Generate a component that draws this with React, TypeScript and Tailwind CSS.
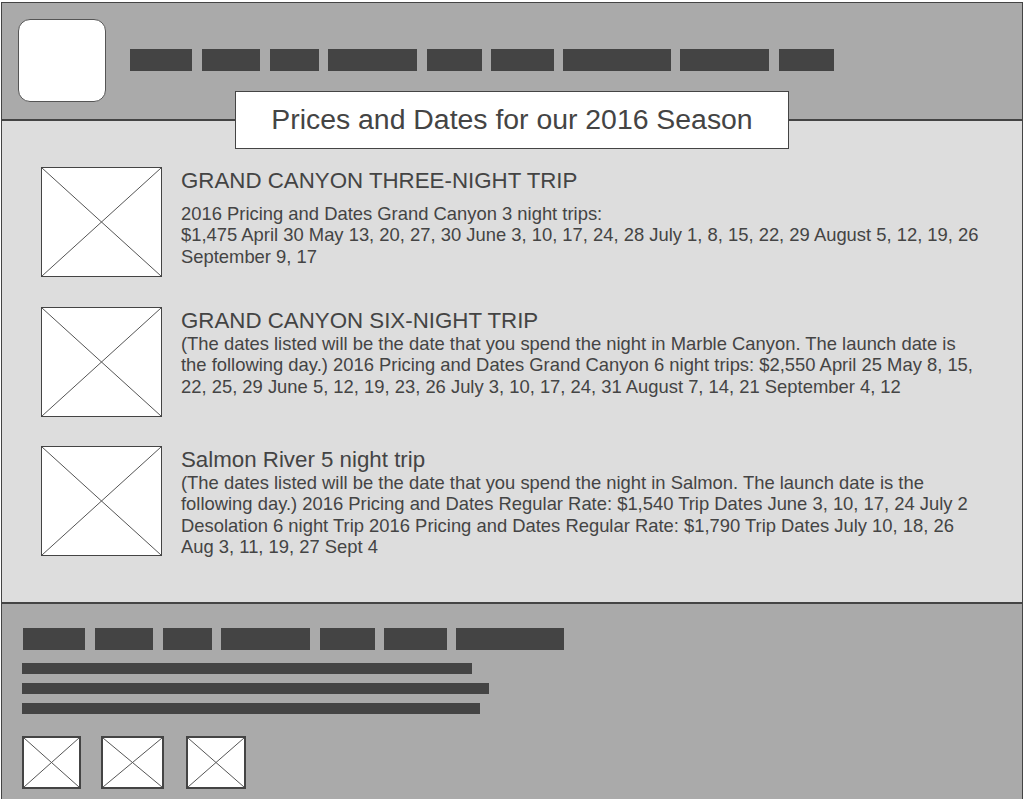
import React from "react";

const headerBars = [
  "w-[62px]",
  "ml-[10px] w-[58px]",
  "ml-[10px] w-[49px]",
  "ml-[9px] w-[89px]",
  "ml-[10px] w-[55px]",
  "ml-[9px] w-[63px]",
  "ml-[9px] w-[108px]",
  "ml-[9px] w-[89px]",
  "ml-[10px] w-[55px]",
];

const footerBars = [
  "ml-px w-[62px]",
  "ml-[10px] w-[58px]",
  "ml-[10px] w-[49px]",
  "ml-[9px] w-[89px]",
  "ml-[10px] w-[55px]",
  "ml-[9px] w-[63px]",
  "ml-[9px] w-[108px]",
];

const trips = [
  {
    title: "GRAND CANYON THREE-NIGHT TRIP",
    spaced: true,
    body: (
      <>
        2016 Pricing and Dates Grand Canyon 3 night trips:
        <br />
        $1,475 April 30 May 13, 20, 27, 30 June 3, 10, 17, 24, 28 July 1, 8, 15, 22, 29 August 5, 12, 19, 26 September 9, 17
      </>
    ),
  },
  {
    title: "GRAND CANYON SIX-NIGHT TRIP",
    spaced: false,
    body: "(The dates listed will be the date that you spend the night in Marble Canyon. The launch date is the following day.) 2016 Pricing and Dates Grand Canyon 6 night trips: $2,550 April 25 May 8, 15, 22, 25, 29 June 5, 12, 19, 23, 26 July 3, 10, 17, 24, 31 August 7, 14, 21 September 4, 12",
  },
  {
    title: "Salmon River 5 night trip",
    spaced: false,
    body: "(The dates listed will be the date that you spend the night in Salmon. The launch date is the following day.) 2016 Pricing and Dates Regular Rate: $1,540 Trip Dates June 3, 10, 17, 24 July 2 Desolation 6 night Trip 2016 Pricing and Dates Regular Rate: $1,790 Trip Dates July 10, 18, 26 Aug 3, 11, 19, 27 Sept 4",
  },
];

const Placeholder = ({ className }: { className: string }) => (
  <div className={`shrink-0 bg-white border-[#444] ${className}`}>
    <svg className="block w-full h-full" viewBox="0 0 100 100" preserveAspectRatio="none">
      <line x1="0" y1="0" x2="100" y2="100" stroke="#555" strokeWidth="1" vectorEffect="non-scaling-stroke" />
      <line x1="100" y1="0" x2="0" y2="100" stroke="#555" strokeWidth="1" vectorEffect="non-scaling-stroke" />
    </svg>
  </div>
);

const App = () => {
  return (
    <div className="w-[1024px] h-[799px] overflow-hidden bg-white font-['Liberation_Sans',Arial,sans-serif] text-[#444]">
      <div className="relative ml-px mt-[2px] w-[1022px] h-[800px] border border-[#444] flex flex-col">

        {/* header */}
        <div className="flex items-start h-[118px] shrink-0 bg-[#aaaaaa] border-b-2 border-[#444] pl-4 pt-4">
          <div className="w-[88px] h-[83px] bg-white border border-[#555] rounded-[12px]" />
          <div className="flex ml-6 mt-[30px]">
            {headerBars.map((c, i) => (
              <div key={i} className={`h-[22px] bg-[#444] ${c}`} />
            ))}
          </div>
        </div>

        <div className="absolute left-[233px] top-[88px] w-[554px] h-[58px] flex items-center justify-center pb-[2px] bg-white border border-[#444] text-[28.4px] leading-none">
          Prices and Dates for our 2016 Season
        </div>

        {/* trips */}
        <div className="flex flex-col gap-[30px] h-[481px] shrink-0 bg-[#dddddd] pl-[39px] pt-[46px]">
          {trips.map((t, i) => (
            <div key={i} className={`flex items-start h-[110px] ${i === 2 ? "-mt-px" : ""}`}>
              <Placeholder className="w-[121px] h-[110px] border" />
              <div className="ml-[19px] w-[803px] pt-px">
                <div className="text-[22.3px] leading-[26px]">{t.title}</div>
                <div className={`text-[18.4px] leading-[21.4px] -mt-px ${t.spaced ? "mt-[9px]" : ""}`}>{t.body}</div>
              </div>
            </div>
          ))}
        </div>

        {/* footer */}
        <div className="flex-1 bg-[#aaaaaa] border-t-2 border-[#444] pl-5 pt-6">
          <div className="flex">
            {footerBars.map((c, i) => (
              <div key={i} className={`h-[22px] bg-[#444] ${c}`} />
            ))}
          </div>
          <div className="flex flex-col gap-[9px] mt-[13px]">
            <div className="h-[11px] w-[450px] bg-[#444]" />
            <div className="h-[11px] w-[467px] bg-[#444]" />
            <div className="h-[11px] w-[458px] bg-[#444]" />
          </div>
          <div className="flex mt-[22px]">
            <Placeholder className="w-[59px] h-[53px] border-2" />
            <Placeholder className="ml-[20px] w-[63px] h-[53px] border-2" />
            <Placeholder className="ml-[22px] w-[60px] h-[53px] border-2" />
          </div>
        </div>

      </div>
    </div>
  );
};

export default App;
